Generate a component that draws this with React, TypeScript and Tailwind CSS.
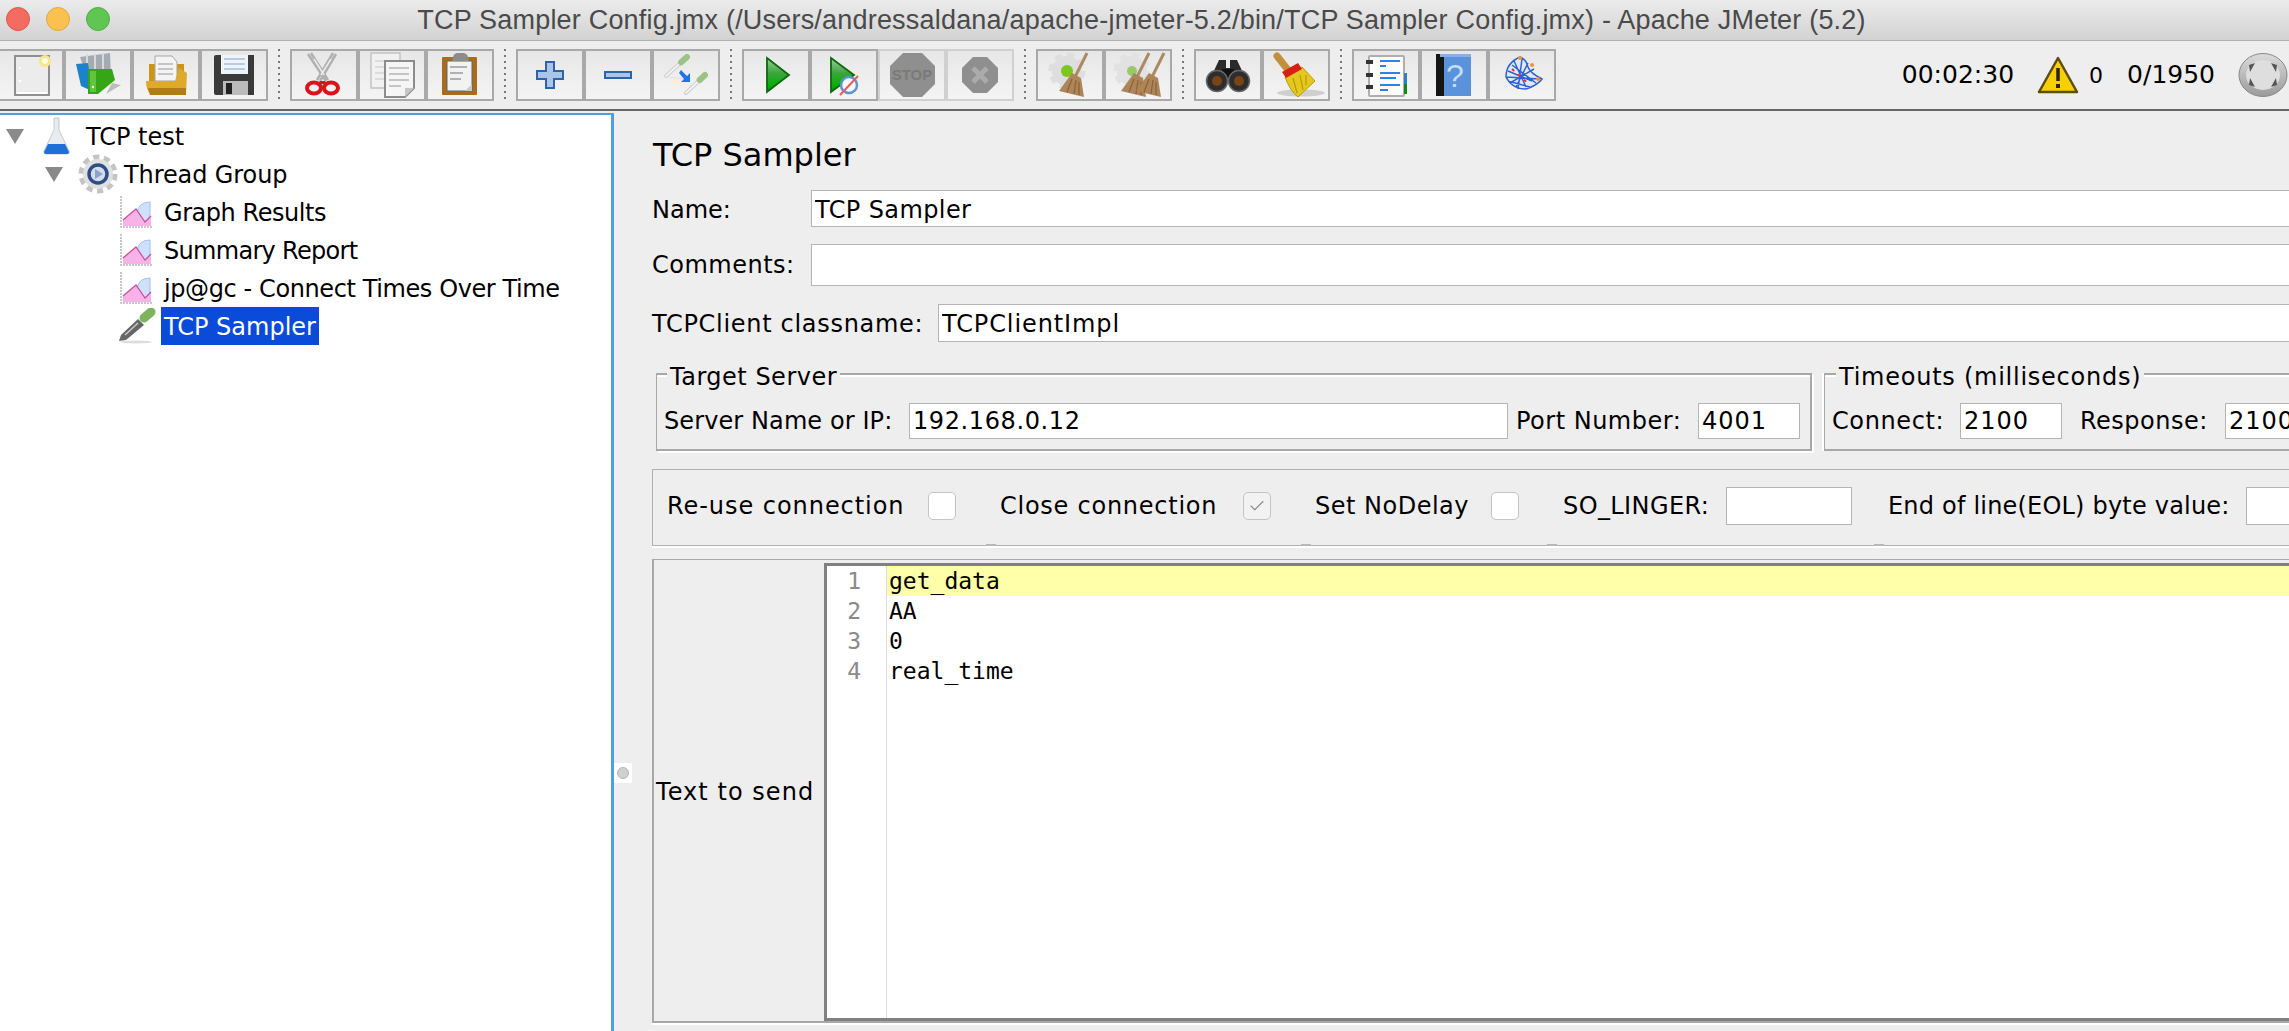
import React from 'react';
import { Check } from 'lucide-react';

const mono = "font-['DejaVu_Sans_Mono',monospace]";

const Svg = ({ children }: { children: React.ReactNode }) => (
  <svg width="64" height="48" viewBox="0 0 64 48" className="blur-[0.4px]">{children}</svg>
);

// droppers show up in the toggle button
const Dropper = ({ x1, y1, x2, y2, w = 4 }: { x1: number; y1: number; x2: number; y2: number; w?: number }) => {
  const mx = x1 + (x2 - x1) * 0.72;
  const my = y1 + (y2 - y1) * 0.72;
  return (
    <g strokeLinecap="round">
      <line x1={x1} y1={y1} x2={mx} y2={my} stroke="#d2d2d2" strokeWidth={w} />
      <line x1={x1} y1={y1} x2={mx} y2={my} stroke="#f6f6f6" strokeWidth={w / 2.4} />
      <line x1={mx} y1={my} x2={x2} y2={y2} stroke="#9cc286" strokeWidth={w * 1.5} />
    </g>
  );
};

const Gear = ({ cx, cy, fill }: { cx: number; cy: number; fill: string }) => (
  <g>
    <circle cx={cx} cy={cy} r="16" fill="none" stroke={fill} strokeWidth="5" strokeDasharray="7 5.5" />
    <circle cx={cx} cy={cy} r="15" fill={fill} />
  </g>
);

const Broom = ({ dx = 0 }: { dx?: number }) => (
  <g transform={`translate(${dx} 0)`}>
    <line x1="49" y1="2" x2="36" y2="28" stroke="#a98a62" strokeWidth="3" />
    <path d="M34 22 L43 27 L46 46 L21 40 Z" fill="#ad8558" />
    <path d="M34 28 L29 41 M38 29 L36 43 M41 31 L41 44" stroke="#8a6238" strokeWidth="1.2" />
  </g>
);

const toolGroups: { icon: React.ReactNode; disabled?: boolean }[][] = [
  [
    {
      icon: (
        <Svg>
          <rect x="17" y="5" width="34" height="39" fill="#ececec" stroke="#8f8f8f" strokeWidth="2" />
          <line x1="19" y1="42" x2="49" y2="42" stroke="#fff" strokeWidth="2" />
          <circle cx="22" cy="17" r="1" fill="#fff" />
          <circle cx="22" cy="30" r="1.2" fill="#fff" />
          <circle cx="47" cy="10" r="6" fill="#f4e88a" />
          <circle cx="47" cy="10" r="3" fill="#fffde0" />
        </Svg>
      ),
    },
    {
      icon: (
        <Svg>
          <path d="M14 6 L44 2 L45 26 L22 28 Z" fill="#a3abb3" />
          <path d="M21 3 V20 M29 3 V20 M37 2 V20" stroke="#d5dade" strokeWidth="2" />
          <path d="M10 13 L22 12 L26 40 L15 35 Z" fill="#1b83c6" />
          <path d="M22 18 L46 18 L49 29 L32 43 L22 43 Z" fill="#36a516" />
          <rect x="24" y="20" width="6" height="21" fill="#63c53d" />
          <circle cx="27" cy="36" r="1.2" fill="#fff" />
          <path d="M46 32 L55 34 L40 43 Z" fill="#bdbdbd" />
        </Svg>
      ),
    },
    {
      icon: (
        <Svg>
          <path d="M15 13 H50 V38 H15 Z" fill="#cf9414" />
          <path d="M21 5 H38 L43 11 V30 H21 Z" fill="#f4f4f4" stroke="#a5a5a5" />
          <path d="M24 13 H39 M24 18 H39 M24 23 H39" stroke="#b5b5b5" strokeWidth="1.5" />
          <path d="M45 17 L53 22 L52 43 H16 Q12 38 12 30 H41 Z" fill="#deaa2c" />
          <path d="M14 37 H52 V44 H16 Z" fill="#b07d12" />
        </Svg>
      ),
    },
    {
      icon: (
        <Svg>
          <path d="M12 6 Q12 4 14 4 H52 V44 H14 Q12 44 12 42 Z" fill="#3a3a3a" />
          <rect x="19" y="4" width="27" height="19" fill="#f0f4f8" />
          <path d="M22 8 H43 M22 13 H43 M22 18 H43" stroke="#a3bfdb" strokeWidth="1.6" />
          <rect x="21" y="30" width="25" height="14" fill="#bcbcbc" />
          <rect x="24" y="32" width="6" height="11" fill="#222" />
        </Svg>
      ),
    },
  ],
  [
    {
      icon: (
        <Svg>
          <path d="M16 3 L34 30 M19 2 L36 29" stroke="#b0b0b0" strokeWidth="2.5" />
          <path d="M44 3 L28 30 M41 2 L25 29" stroke="#b0b0b0" strokeWidth="2.5" />
          <line x1="22" y1="8" x2="32" y2="24" stroke="#ececec" strokeWidth="1.5" />
          <line x1="39" y1="8" x2="29" y2="24" stroke="#ececec" strokeWidth="1.5" />
          <ellipse cx="22" cy="37" rx="7" ry="5.5" fill="none" stroke="#d8141c" strokeWidth="4" />
          <ellipse cx="39" cy="37" rx="7" ry="5.5" fill="none" stroke="#d8141c" strokeWidth="4" />
          <path d="M28 30 L33 30 L36 33 L25 33 Z" fill="#d8141c" />
        </Svg>
      ),
    },
    {
      icon: (
        <Svg>
          <rect x="11" y="2" width="29" height="35" fill="#f1f1f1" stroke="#c2c2c2" strokeWidth="1.5" />
          <path d="M15 10 H30 M15 16 H25 M15 22 H25 M15 28 H25" stroke="#d5d5d5" strokeWidth="1.5" />
          <path d="M25 10 H54 V37 L45 46 H25 Z" fill="#f5f5f5" stroke="#8c8c8c" strokeWidth="2" />
          <path d="M29 17 H49 M29 23 H49 M29 29 H49 M29 35 H41" stroke="#b4b4b4" strokeWidth="1.5" />
          <path d="M45 46 V37 H54 Z" fill="#c5c5c5" />
        </Svg>
      ),
    },
    {
      icon: (
        <Svg>
          <rect x="14" y="6" width="35" height="38" rx="1" fill="#a86c1c" />
          <rect x="19" y="10" width="25" height="30" fill="#f2f2f2" stroke="#666" />
          <path d="M22 16 H39 M22 22 H35 M22 28 H33" stroke="#9c9c9c" strokeWidth="1.5" />
          <path d="M37 40 L44 33 L44 40 Z" fill="#c8c8c8" />
          <path d="M25 7 Q25 3 29 2 H36 Q40 3 40 7 L41 10 H24 Z" fill="#8d8d85" />
        </Svg>
      ),
    },
  ],
  [
    {
      icon: (
        <Svg>
          <path
            d="M28 11 H36 V20 H45 V28 H36 V37 H28 V28 H19 V20 H28 Z"
            fill="#a9c6e8"
            stroke="#2f62a6"
            strokeWidth="2"
          />
        </Svg>
      ),
    },
    {
      icon: (
        <Svg>
          <rect x="19" y="21" width="26" height="6" fill="#a9c6e8" stroke="#2f62a6" strokeWidth="2" />
        </Svg>
      ),
    },
    {
      icon: (
        <Svg>
          <Dropper x1={12} y1={25} x2={33} y2={6} />
          <Dropper x1={32} y1={42} x2={51} y2={24} />
          <line x1="14" y1="26" x2="30" y2="28" stroke="#e4e4e4" strokeWidth="1.5" />
          <path d="M27 19 L33 25 L36 22 L36 31 L27 31 L30 28 L25 22 Z" fill="#1f73ee" />
        </Svg>
      ),
    },
  ],
  [
    {
      icon: (
        <Svg>
          <defs>
            <linearGradient id="play1" x1="0" y1="0" x2="0" y2="1">
              <stop offset="0" stopColor="#9ccf9c" />
              <stop offset="0.45" stopColor="#3aa53a" />
              <stop offset="0.8" stopColor="#06b006" />
              <stop offset="1" stopColor="#0a8a0a" />
            </linearGradient>
          </defs>
          <path d="M23 7 L45 24 L23 41 Z" fill="url(#play1)" stroke="#0c690c" strokeWidth="1.8" />
        </Svg>
      ),
    },
    {
      icon: (
        <Svg>
          <defs>
            <linearGradient id="play2" x1="0" y1="0" x2="0" y2="1">
              <stop offset="0" stopColor="#9ccf9c" />
              <stop offset="0.45" stopColor="#3aa53a" />
              <stop offset="0.8" stopColor="#06b006" />
              <stop offset="1" stopColor="#0a8a0a" />
            </linearGradient>
          </defs>
          <path d="M19 7 L42 24 L19 41 Z" fill="url(#play2)" stroke="#0c690c" strokeWidth="1.8" />
          <circle cx="37" cy="34" r="8" fill="#f5f8fc" stroke="#5d93cf" strokeWidth="2.5" />
          <line x1="28" y1="44" x2="46" y2="25" stroke="#ea5a5a" strokeWidth="2" />
        </Svg>
      ),
    },
    {
      disabled: true,
      icon: (
        <div className="relative flex items-center justify-center">
          <Svg>
            <path d="M23 2 H42 L55 15 V33 L42 46 H23 L10 33 V15 Z" fill="#8f8f8f" />
          </Svg>
          <span className="absolute inset-0 flex items-center justify-center font-['Liberation_Sans',sans-serif] text-[15px] font-bold text-[#7a7a7a]">
            STOP
          </span>
        </div>
      ),
    },
    {
      disabled: true,
      icon: (
        <Svg>
          <path d="M25 6 H39 L50 17 V31 L39 42 H25 L14 31 V17 Z" fill="#8f8f8f" />
          <path d="M25 17 L39 31 M39 17 L25 31" stroke="#ababab" strokeWidth="5" />
        </Svg>
      ),
    },
  ],
  [
    {
      icon: (
        <Svg>
          <Gear cx={29} cy={20} fill="#dedede" />
          <circle cx="29" cy="20" r="6" fill="#7cc61e" />
          <Broom />
        </Svg>
      ),
    },
    {
      icon: (
        <Svg>
          <Gear cx={26} cy={20} fill="#e2e2e2" />
          <circle cx="26" cy="20" r="5" fill="#9bc86a" />
          <Broom dx={-6} />
          <Broom dx={9} />
        </Svg>
      ),
    },
  ],
  [
    {
      icon: (
        <Svg>
          <path d="M23 9 H30 V17 H34 V9 H41 L48 24 H16 Z" fill="#2a2a2a" />
          <rect x="26" y="18" width="12" height="11" fill="#111" />
          <circle cx="21" cy="30" r="10.5" fill="#2d2d2d" stroke="#666" strokeWidth="1.5" />
          <circle cx="43" cy="30" r="10.5" fill="#2d2d2d" stroke="#666" strokeWidth="1.5" />
          <circle cx="21" cy="30" r="5" fill="#7a4516" />
          <circle cx="43" cy="30" r="5" fill="#7a4516" />
        </Svg>
      ),
    },
    {
      icon: (
        <Svg>
          <ellipse cx="37" cy="42" rx="24" ry="3.5" fill="#cfcfcf" />
          <line x1="13" y1="5" x2="24" y2="19" stroke="#c48e3e" strokeWidth="7" strokeLinecap="round" />
          <path d="M21 26 L38 16 L51 30 L34 46 Q26 40 21 26 Z" fill="#e6c71c" stroke="#b39a10" />
          <path d="M29 27 L33 42 M36 24 L39 39 M42 24 L42 34" stroke="#b39a10" strokeWidth="1.2" />
          <path d="M18 21 L34 12 L38 18 L22 27 Z" fill="#d81e16" />
        </Svg>
      ),
    },
  ],
  [
    {
      icon: (
        <Svg>
          <rect x="15" y="5" width="35" height="40" rx="1" fill="#fbfbfb" stroke="#aeaeae" strokeWidth="2" />
          <path d="M12 11 H19 M12 24 H19 M12 36 H19" stroke="#333" strokeWidth="4" />
          <path d="M26 10 H46 M26 15 H32 M26 22 H46 M26 27 H42 M26 34 H46 M26 39 H34" stroke="#2b83ea" strokeWidth="1.8" />
          <rect x="50" y="22" width="3" height="11" fill="#2a7fd4" />
          <rect x="50" y="33" width="3" height="10" fill="#128a12" />
        </Svg>
      ),
    },
    {
      icon: (
        <div className="relative">
          <Svg>
            <rect x="14" y="3" width="35" height="42" fill="#5a93dc" />
            <rect x="14" y="3" width="8" height="42" fill="#151515" />
            <rect x="18" y="3" width="31" height="3" fill="#8bb0df" />
          </Svg>
          <span className="absolute left-[24px] top-[7px] font-['Liberation_Sans',sans-serif] text-[32px] leading-[36px] text-[#c9dcf5]">
            ?
          </span>
        </div>
      ),
    },
    {
      icon: (
        <Svg>
          <path d="M30 6 Q16 12 16 26 Q22 38 36 38 Q48 34 52 28 Q40 22 38 16 Q36 8 30 6 Z" fill="#dfe8f8" />
          <path
            d="M30 6 Q16 12 16 26 Q22 38 36 38 Q48 34 52 28 Q40 22 38 16 Q36 8 30 6 M18 20 L42 30 M24 10 L36 36 M20 32 L44 18 M32 8 L28 38 M16 26 L50 28 M22 14 L46 32 M26 36 L38 12 M18 30 L40 36"
            fill="none"
            stroke="#2f62d0"
            strokeWidth="1.5"
          />
          <path d="M22 18 L40 34" stroke="#d33" strokeWidth="2" strokeDasharray="3 5" />
          <circle cx="30" cy="7" r="2" fill="#e8963a" />
          <circle cx="42" cy="14" r="2" fill="#e8963a" />
          <circle cx="48" cy="28" r="2" fill="#e8963a" />
        </Svg>
      ),
    },
  ],
];

const Sampler = () => (
  <svg width="38" height="36" viewBox="0 0 38 36" className="blur-[0.3px]">
    <ellipse cx="18" cy="34" rx="16" ry="1.5" fill="#dcdcdc" />
    <path d="M1 33 L3 27 L20 11 L26 17 L8 32 Z" fill="#666" />
    <line x1="7" y1="27" x2="20" y2="15" stroke="#c8c8c8" strokeWidth="1.6" />
    <line x1="26" y1="10" x2="33" y2="4" stroke="#7fb45f" strokeWidth="9" strokeLinecap="round" />
  </svg>
);

const Chart = () => (
  <svg width="33" height="33" viewBox="0 0 33 33" className="blur-[0.25px]">
    <path d="M1 0 V31 H33" fill="none" stroke="#b5b5b5" strokeWidth="1.5" strokeDasharray="2 1" />
    <path d="M17 16 Q19 6 30 6 V25 L25 29 Z" fill="#cfe0fa" stroke="#a0c0f2" />
    <path d="M3 30 V24 L10 18 L16 13 L25 26 L31 20 V30 Z" fill="#f7b2e8" />
    <path d="M3 24 L10 18 L16 13 L25 26 L31 20" fill="none" stroke="#c7529a" strokeWidth="1.3" />
  </svg>
);

const Arrow = () => (
  <svg width="18" height="15" viewBox="0 0 18 15" className="shrink-0">
    <path d="M0 0 H18 L9 15 Z" fill="#8a8a8a" />
  </svg>
);

const Field = ({ value = '', className = '' }: { value?: string; className?: string }) => (
  <input
    readOnly
    value={value}
    className={`h-full border border-[#b4b4b4] bg-white px-[3px] outline-none ${className}`}
  />
);

const CheckBox = ({ checked = false }: { checked?: boolean }) => (
  <div
    className={`flex h-[28px] w-[28px] shrink-0 items-center justify-center rounded-[5px] border border-[#c4c4c4] ${
      checked ? 'bg-[#f2f2f2]' : 'bg-white'
    }`}
  >
    {checked && <Check size={18} strokeWidth={1.5} className="text-[#8a8a8a]" />}
  </div>
);

const listeners = [
  { label: 'Graph Results', tracking: 'tracking-[-0.45px]' },
  { label: 'Summary Report', tracking: 'tracking-[-0.7px]' },
  { label: 'jp@gc - Connect Times Over Time', tracking: 'tracking-[-0.4px]' },
];

export default function App() {
  return (
    <div className="flex h-[1031px] w-[2289px] flex-col overflow-hidden bg-[#eeeeee] font-['DejaVu_Sans',sans-serif] text-[24px] text-black">
      {/* Title bar */}
      <div className="relative flex h-[41px] shrink-0 items-center justify-center border-b border-[#b0b0b0] bg-linear-to-b from-[#ececec] to-[#d2d2d2]">
        <div className="absolute left-[6px] top-[7px] flex gap-[16px]">
          <div className="h-[24px] w-[24px] rounded-full border border-[#e2564c] bg-[#f46b61]" />
          <div className="h-[24px] w-[24px] rounded-full border border-[#e5a93a] bg-[#fac050]" />
          <div className="h-[24px] w-[24px] rounded-full border border-[#4fae45] bg-[#60c653]" />
        </div>
        <span className="-ml-[6px] font-['Liberation_Sans',sans-serif] text-[27px] tracking-[0.2px] text-[#4a4a4a]">
          TCP Sampler Config.jmx (/Users/andressaldana/apache-jmeter-5.2/bin/TCP Sampler Config.jmx) - Apache JMeter (5.2)
        </span>
      </div>

      {/* Toolbar */}
      <div className="flex h-[70px] shrink-0 items-center border-b-2 border-[#666666]">
        <div className="-ml-[4px] flex">
          {toolGroups.map((group, i) => (
            <React.Fragment key={i}>
              {i > 0 && (
                <div className="flex w-[22px] justify-center">
                  <div className="h-[52px] w-[2px] bg-[linear-gradient(#777_40%,transparent_40%)] bg-[length:2px_6px]" />
                </div>
              )}
              {group.map((tool, j) => (
                <div
                  key={j}
                  className={`flex h-[52px] w-[68px] items-center justify-center border-2 bg-linear-to-b from-[#e7e7e7] to-[#f4f4f4] ${
                    tool.disabled ? 'border-[#d0d0d0]' : 'border-[#a9a9a9]'
                  }`}
                >
                  {tool.icon}
                </div>
              ))}
            </React.Fragment>
          ))}
        </div>
        <div className="ml-auto flex items-center">
          <span className="text-[25px]">00:02:30</span>
          <svg width="42" height="38" viewBox="0 0 42 38" className="ml-[23px]">
            <path d="M21 2 L40 36 H2 Z" fill="#f8cf00" stroke="#5e4d10" strokeWidth="2.5" strokeLinejoin="round" />
            <path d="M21 12 V25" stroke="#2a2200" strokeWidth="3.5" />
            <rect x="19" y="28" width="4" height="4" fill="#2a2200" />
          </svg>
          <span className="ml-[10px] w-[14px] text-[22px]">0</span>
          <span className="ml-[24px] text-[25px]">0/1950</span>
          <svg width="50" height="44" viewBox="0 0 50 44" className="ml-[23px] mr-[1px]">
            <defs>
              <linearGradient id="ball" x1="0" y1="0" x2="0" y2="1">
                <stop offset="0" stopColor="#dcdcdc" />
                <stop offset="1" stopColor="#9a9a9a" />
              </linearGradient>
            </defs>
            <ellipse cx="25" cy="22" rx="24" ry="21.5" fill="url(#ball)" stroke="#888" />
            <ellipse cx="25" cy="22" rx="17" ry="15" fill="#dedede" />
            <path d="M17 10 L11 12 L12 19 Z M33 10 L39 12 L38 19 Z M17 34 L11 32 L12 25 Z M33 34 L39 32 L38 25 Z" fill="#555" />
          </svg>
        </div>
      </div>

      <div className="flex min-h-0 flex-1">
        {/* Test plan tree */}
        <div className="mt-[2px] w-[614px] shrink-0 border-r-[3px] border-t-2 border-[#4da0e6] bg-white pt-[2px]">
          <div className="flex h-[38px] items-center pl-[6px]">
            <Arrow />
            <svg width="30" height="38" viewBox="0 0 30 38" className="ml-[19px] blur-[0.3px]">
              <path d="M11 1 H16 V13 L26 34 Q27 37 24 37 H3 Q0 37 1 34 L11 13 Z" fill="#e8ebf0" stroke="#c4cad2" />
              <path d="M5 27 H22 L26 35 Q26 37 24 37 H3 Q1 37 1 35 Z" fill="#1f6fd8" />
            </svg>
            <span className="ml-[13px] pt-[2px]">TCP test</span>
          </div>
          <div className="flex h-[38px] items-center pl-[45px]">
            <Arrow />
            <svg width="40" height="40" viewBox="0 0 40 40" className="ml-[15px] shrink-0 blur-[0.3px]">
              <circle cx="20" cy="20" r="16.5" fill="none" stroke="#c4c4c4" strokeWidth="6" strokeDasharray="6 4.37" />
              <circle cx="20" cy="20" r="15" fill="#e0e0e0" />
              <circle cx="20" cy="20" r="9" fill="#d4dde9" stroke="#2c4e86" strokeWidth="3.5" />
              <path d="M17 15 L25 20 L17 25 Z" fill="#8aa3c8" />
            </svg>
            <span className="ml-[6px] pt-[2px] tracking-[-0.1px]">Thread Group</span>
          </div>
          {listeners.map(({ label, tracking }) => (
            <div key={label} className="flex h-[38px] items-center pl-[120px]">
              <Chart />
              <span className={`ml-[11px] pt-[1px] ${tracking}`}>{label}</span>
            </div>
          ))}
          <div className="flex h-[38px] items-center pl-[118px]">
            <Sampler />
            <span className="ml-[5px] flex h-[38px] items-center bg-[#0b4bd9] px-[3px] pt-[1px] text-white">TCP Sampler</span>
          </div>
        </div>

        {/* Sampler editor */}
        <div className="relative min-w-0 flex-1 overflow-hidden">
          <div className="absolute left-0 top-[652px] z-10 flex h-[20px] w-[18px] items-center justify-center bg-white">
            <div className="h-[12px] w-[12px] rounded-full border border-[#b5b5b5] bg-[#d0d0d0]" />
          </div>

          <div className="ml-[38px] w-[1700px] pt-[24px]">
            <h1 className="pl-[1px] text-[32px] font-normal leading-[40px]">TCP Sampler</h1>

            <div className="mt-[15px] flex h-[37px] items-center">
              <span className="w-[159px] pt-[2px]">Name:</span>
              <Field value="TCP Sampler" className="flex-1 pt-[2px] tracking-[0.4px]" />
            </div>
            <div className="mt-[17px] flex h-[42px] items-center">
              <span className="w-[159px] tracking-[0.5px]">Comments:</span>
              <Field className="flex-1" />
            </div>
            <div className="mt-[18px] flex h-[38px] items-center">
              <span className="w-[286px] pt-[2px] tracking-[0.7px]">TCPClient classname:</span>
              <Field value="TCPClientImpl" className="flex-1 pt-[2px] tracking-[0.9px]" />
            </div>

            <div className="mt-[31px] flex gap-[12px] pl-[4px]">
              <div className="relative h-[78px] w-[1156px] border-2 border-l border-[#a8a8a8] pl-[7px] pt-[28px] shadow-[inset_0_2px_0_#fff,2px_2px_0_#fff]">
                <span className="absolute -top-[12px] left-[10px] bg-[#eeeeee] px-[3px] leading-[28px] tracking-[0.5px]">Target Server</span>
                <div className="flex h-[36px] items-center">
                  <span className="w-[245px] tracking-[0.1px]">Server Name or IP:</span>
                  <Field value="192.168.0.12" className="w-[599px] tracking-[0.6px]" />
                  <span className="ml-[8px] w-[182px] tracking-[0.5px]">Port Number:</span>
                  <Field value="4001" className="w-[102px] tracking-[1px]" />
                </div>
              </div>
              <div className="relative h-[78px] flex-1 border-2 border-l border-[#a8a8a8] pl-[7px] pt-[28px] shadow-[inset_0_2px_0_#fff,-2px_0_0_#fff]">
                <span className="absolute -top-[12px] left-[11px] bg-[#eeeeee] px-[3px] leading-[28px] tracking-[0.75px]">Timeouts (milliseconds)</span>
                <div className="flex h-[36px] items-center">
                  <span className="w-[128px] tracking-[0.6px]">Connect:</span>
                  <Field value="2100" className="w-[102px] tracking-[1px]" />
                  <span className="ml-[18px] w-[145px] tracking-[0.5px]">Response:</span>
                  <Field value="2100" className="w-[102px] tracking-[1px]" />
                </div>
              </div>
            </div>

            <div className="relative mt-[18px] flex h-[77px] items-center border border-[#b0b0b0] pb-[3px] pl-[14px] shadow-[0_2px_0_#fff]">
              <span className="w-[261px] tracking-[0.95px]">Re-use connection</span>
              <CheckBox />
              <span className="ml-[44px] w-[243px] tracking-[0.75px]">Close connection</span>
              <CheckBox checked />
              <span className="ml-[44px] w-[176px] tracking-[0.5px]">Set NoDelay</span>
              <CheckBox />
              <span className="ml-[44px] w-[163px] tracking-[0.4px]">SO_LINGER:</span>
              <div className="h-[38px] w-[126px]">
                <Field className="w-full" />
              </div>
              <span className="ml-[36px] w-[358px] tracking-[0.2px]">End of line(EOL) byte value:</span>
              <div className="h-[38px] w-[100px]">
                <Field className="w-full" />
              </div>
              <div className="absolute -bottom-px left-[333px] h-[2px] w-[10px] bg-[#b8b8b8]" />
              <div className="absolute -bottom-px left-[648px] h-[2px] w-[10px] bg-[#b8b8b8]" />
              <div className="absolute -bottom-px left-[894px] h-[2px] w-[10px] bg-[#b8b8b8]" />
              <div className="absolute -bottom-px left-[1221px] h-[2px] w-[10px] bg-[#b8b8b8]" />
            </div>

            <div className="mt-[13px] flex h-[464px] border-b-2 border-l-2 border-t border-[#a8a8a8] pt-[3px] shadow-[0_2px_0_#fff]">
              <div className="flex w-[170px] shrink-0 items-center pl-[2px]">
                <span className="tracking-[1.05px]">Text to send</span>
              </div>
              <div className={`flex flex-1 border-y-[3px] border-l-[3px] border-[#808080] bg-white text-[23px] leading-[30px] ${mono}`}>
                <div className="w-[60px] shrink-0 border-r border-[#dcdcdc] pr-[25px] text-right text-[#8a8a8a]">
                  <div>1</div>
                  <div>2</div>
                  <div>3</div>
                  <div>4</div>
                </div>
                <div className="flex-1">
                  <div className="bg-[#ffffaa] pl-[2px]">get_data</div>
                  <div className="pl-[2px]">AA</div>
                  <div className="pl-[2px]">0</div>
                  <div className="pl-[2px]">real_time</div>
                </div>
              </div>
            </div>
          </div>
        </div>
      </div>
    </div>
  );
}
